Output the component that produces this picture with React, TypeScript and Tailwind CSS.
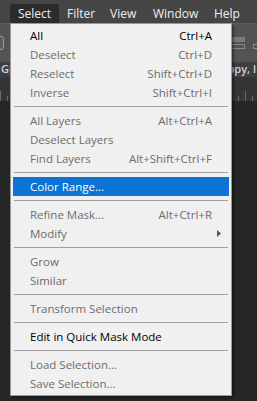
import { ReactNode } from "react";

type Item =
  | { sep: true }
  | { label: string; keys?: string; on?: boolean; active?: boolean; sub?: boolean };

const ITEMS: Item[] = [
  { label: "All", keys: "Ctrl+A", on: true },
  { label: "Deselect", keys: "Ctrl+D" },
  { label: "Reselect", keys: "Shift+Ctrl+D" },
  { label: "Inverse", keys: "Shift+Ctrl+I" },
  { sep: true },
  { label: "All Layers", keys: "Alt+Ctrl+A" },
  { label: "Deselect Layers" },
  { label: "Find Layers", keys: "Alt+Shift+Ctrl+F" },
  { sep: true },
  { label: "Color Range...", active: true },
  { sep: true },
  { label: "Refine Mask...", keys: "Alt+Ctrl+R" },
  { label: "Modify", sub: true },
  { sep: true },
  { label: "Grow" },
  { label: "Similar" },
  { sep: true },
  { label: "Transform Selection" },
  { sep: true },
  { label: "Edit in Quick Mask Mode", on: true },
  { sep: true },
  { label: "Load Selection..." },
  { label: "Save Selection..." },
];

// menubar entries with the width each one takes in the bar
const MENUS: { name: string; w: string }[] = [
  { name: "Select", w: "w-[49px]" },
  { name: "Filter", w: "w-[43px]" },
  { name: "View", w: "w-[43px]" },
  { name: "Window", w: "w-[61px]" },
  { name: "Help", w: "w-[40px]" },
];

function Ticks() {
  return (
    <svg width="257" height="10" className="block">
      {Array.from({ length: 40 }).map((_, i) => (
        <line key={i} x1={i * 7 + 0.5} x2={i * 7 + 0.5} y1={i % 5 === 0 ? 0 : 5} y2={10} stroke="#6a6a6a" strokeWidth="1" />
      ))}
    </svg>
  );
}

function Row({ children, className }: { children: ReactNode; className?: string }) {
  return <div className={"flex h-[19px] items-center " + (className ?? "")}>{children}</div>;
}

export default function App() {
  return (
    <div
      className="relative h-[401px] w-[257px] overflow-hidden bg-[#262626]"
      style={{ fontFamily: "'Open Sans', 'Noto Sans', sans-serif" }}
    >
      {/* menubar */}
      <div className="flex h-[23px] items-end bg-[#454545] pl-[10px] text-[12px] text-[#f0f0f0]">
        {MENUS.map((m, i) => (
          <div
            key={m.name}
            className={
              "flex h-[19px] items-center pl-[8px] " + m.w + (i === 0 ? " bg-[#2b2b2b] rounded-t-[2px]" : "")
            }
          >
            {m.name}
          </div>
        ))}
      </div>

      {/* options bar */}
      <div className="flex h-[39px] items-center justify-between border-t border-[#5e5e5e] bg-[#535353]">
        <div className="-ml-[10px] h-[14px] w-[14px] rounded-[3px] border border-[#9a9a9a] bg-[#5c5c5c]" />
        <div className="flex items-center gap-[8px] pr-0">
          <div className="flex flex-col gap-[2px]">
            <div className="ml-[-8px] h-[5px] w-[22px] bg-[#7a7a7a]" />
            <div className="ml-[-8px] h-[5px] w-[22px] border border-[#8a8a8a]" />
          </div>
          <div className="mt-[7px] -mr-[4px] h-[5px] w-[8px] border border-[#8a8a8a]" />
        </div>
      </div>
      {/* doc tab */}
      <div className="flex h-[15px] items-center justify-between bg-[#3f3f3f] px-[1px] text-[11px] font-semibold text-[#c5d4e6]">
        <span>Gl</span>
        <span>opy, l</span>
      </div>
      {/* ruler */}
      <div className="flex h-[24px] flex-col justify-end bg-[#353535]">
        <Ticks />
      </div>

      {/* dropdown */}
      <div className="absolute left-[10px] top-[23px] w-[222px] border border-[#999999] bg-[#f0f0f0] py-[2px] text-[11.5px] text-[#6d6d6d] shadow-[2px_2px_2px_rgba(0,0,0,0.4)]">
        {ITEMS.map((it, i) =>
          "sep" in it ? (
            <div key={i} className="mx-[3px] my-[4px] h-px bg-[#a0a0a0]" />
          ) : (
            <Row
              key={i}
              className={
                it.active
                  ? "mx-[2px] pl-[17px] pr-[17px] bg-[#0b74d5] text-white"
                  : "pl-[19px] pr-[19px] " + (it.on ? "text-black" : "")
              }
            >
              <span className="flex-1 whitespace-nowrap">{it.label}</span>
              {it.keys && <span className="whitespace-nowrap">{it.keys}</span>}
              {it.sub && (
                <svg width="4" height="7" viewBox="0 0 4 7" className="-mr-[9px]">
                  <path d="M0 0L4 3.5L0 7Z" fill="#555555" />
                </svg>
              )}
            </Row>
          )
        )}
      </div>
    </div>
  );
}
